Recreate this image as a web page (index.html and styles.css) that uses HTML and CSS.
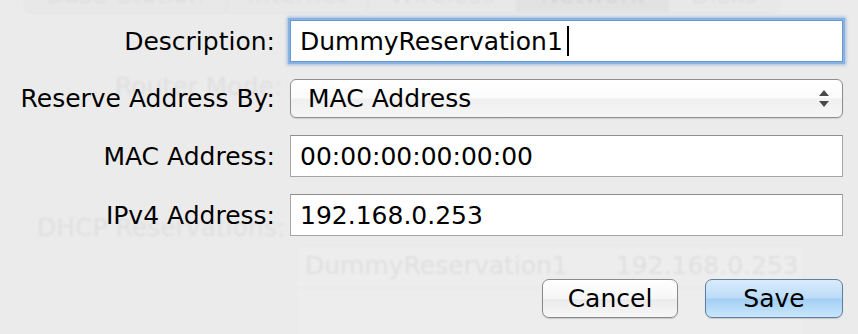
FILE: index.html
```html
<!DOCTYPE html>
<html lang="en">
<head>
    <meta charset="UTF-8">
    <title>DHCP Reservation</title>
    <link rel="stylesheet" href="styles.css">
</head>
<body>
    <div class="stage">
        <!-- window behind the sheet, faded -->
        <div class="window">
            <div class="tabs">
                <span class="tab t-base">Base Station</span>
                <span class="tab t-internet">Internet</span>
                <span class="tab t-wireless">Wireless</span>
                <span class="tab t-network selected">Network</span>
                <span class="tab t-disks">Disks</span>
            </div>
            <div class="ghost-label router">Router Mode:</div>
            <div class="ghost-label dhcp">DHCP Reservations:</div>
            <div class="ghost-table">
                <div class="ghost-row">
                    <span class="ghost-name">DummyReservation1</span>
                    <span>192.168.0.253</span>
                </div>
            </div>
        </div>

        <div class="sheet">
            <div class="form">
                <label class="label">Description:</label>
                <div class="field input focused">DummyReservation1<span class="caret"></span></div>

                <label class="label">Reserve Address By:</label>
                <div class="field popup">
                    <span>MAC Address</span>
                    <svg class="arrows" width="12" height="20" viewBox="0 0 12 20">
                        <path d="M6 1 L11 7 L1 7 Z" fill="#4a4a4a"/>
                        <path d="M1 12 L11 12 L6 18 Z" fill="#4a4a4a"/>
                    </svg>
                </div>

                <label class="label">MAC Address:</label>
                <div class="field input">00:00:00:00:00:00</div>

                <label class="label">IPv4 Address:</label>
                <div class="field input">192.168.0.253</div>
            </div>
            <div class="buttons">
                <button class="btn">Cancel</button>
                <button class="btn default">Save</button>
            </div>
        </div>
    </div>
</body>
</html>
```

FILE: styles.css
```css
body {
    margin: 0;
    background: #ebebeb;
    font-family: 'DejaVu Sans', 'Liberation Sans', sans-serif;
    font-size: 25px;
    color: #000;
    overflow: hidden;
}
.stage {
    position: relative;
    width: 858px;
    height: 334px;
    overflow: hidden;
}

/* faded window in the back */
.window {
    color: #dfdfdf;
    filter: blur(1.2px);
}
.tabs {
    display: flex;
    margin: -22px 0 0 25px;
    width: 755px;
    height: 34px;
    line-height: 34px;
    background: #e8e8e8;
    border-radius: 0 0 8px 8px;
    box-shadow: 0 1px 2px rgba(0,0,0,0.05);
}
.tab {
    text-align: center;
    white-space: nowrap;
    border-right: 1px solid #e2e2e2;
}
.t-base { width: 202px; }
.t-internet { width: 141px; }
.t-wireless { width: 149px; }
.t-network { width: 151px; }
.t-disks { width: 112px; border-right: none; }
.tab.selected {
    background: #e2e2e2;
    color: #d6d6d6;
}
.ghost-label {
    white-space: nowrap;
}
.router {
    margin: 60px 0 0 115px;
}
.dhcp {
    margin: 112px 0 0 37px;
}
.ghost-table {
    margin: 4px 0 0 297px;
    width: 505px;
    height: 100px;
    background: #ededed;
    border-top: 1px solid #e8e8e8;
}
.ghost-row {
    display: flex;
    gap: 48px;
    padding: 4px 8px;
    border-bottom: 1px solid #e6e6e6;
    height: 32px;
}

/* the sheet */
.sheet {
    position: absolute;
    inset: 0;
    display: flex;
    flex-direction: column;
}
.form {
    display: grid;
    grid-template-columns: 275px 553px;
    column-gap: 15px;
    row-gap: 17px;
    margin-top: 20px;
    align-items: center;
}
.label {
    text-align: right;
    white-space: nowrap;
}
.field {
    box-sizing: border-box;
    height: 42px;
    display: flex;
    align-items: center;
    white-space: nowrap;
}
.input {
    background: #fff;
    border: 1px solid #a5a5a5;
    border-top-color: #8e8e8e;
    padding-left: 9px;
}
.input.focused {
    border-color: #6b99cf;
    box-shadow: 0 0 0 2px #86b3e3, 0 0 3px 3px rgba(95, 150, 215, 0.55);
}
.caret {
    display: inline-block;
    width: 2px;
    height: 30px;
    background: #000;
    margin-left: 4px;
}
.popup {
    height: 39px;
    padding: 0 12px 0 17px;
    justify-content: space-between;
    border: 1px solid #8f8f8f;
    border-radius: 6px;
    background: linear-gradient(#ffffff 0%, #fbfbfb 48%, #f0f0f0 52%, #f5f5f5 100%);
    box-shadow: 0 1px 1px rgba(0,0,0,0.12);
}
.arrows {
    display: block;
}
.buttons {
    display: flex;
    justify-content: flex-end;
    gap: 27px;
    margin: 43px 15px 0 0;
}
.btn {
    font-family: inherit;
    font-size: 25px;
    height: 39px;
    width: 136px;
    padding: 0;
    border: 1px solid #8a8a8a;
    border-radius: 7px;
    color: #000;
    background: linear-gradient(#ffffff 0%, #f6f6f6 50%, #ebebeb 52%, #f7f7f7 100%);
    box-shadow: 0 1px 1px rgba(0,0,0,0.15);
}
.btn.default {
    width: 138px;
    border-color: #5f7ea3;
    background: linear-gradient(#d9ecfc 0%, #bcdcf8 48%, #a3cff4 52%, #c9e6fc 100%);
}
```
